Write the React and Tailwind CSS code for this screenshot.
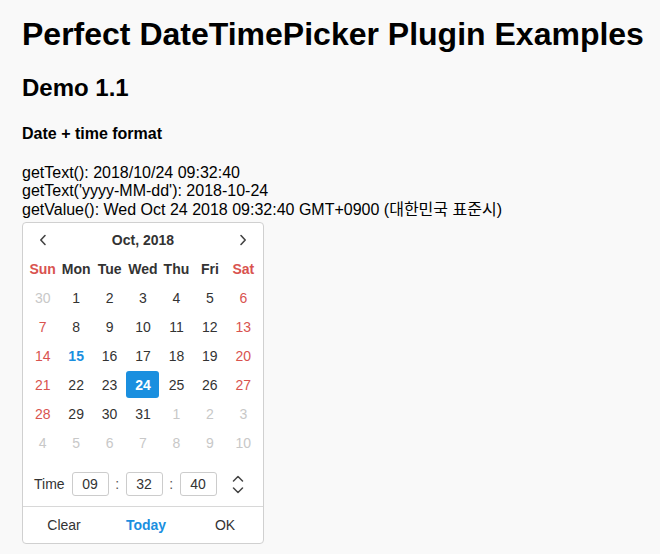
import React from "react";

const font = { fontFamily: '"Liberation Sans", Arial, "Noto Sans CJK KR", sans-serif' };

const weeks = [
  [[30, "o"], [1], [2], [3], [4], [5], [6]],
  [[7], [8], [9], [10], [11], [12], [13]],
  [[14], [15, "today"], [16], [17], [18], [19], [20]],
  [[21], [22], [23], [24, "sel"], [25], [26], [27]],
  [[28], [29], [30], [31], [1, "o"], [2, "o"], [3, "o"]],
  [[4, "o"], [5, "o"], [6, "o"], [7, "o"], [8, "o"], [9, "o"], [10, "o"]],
];

function Day({ d, kind, col }) {
  if (kind === "sel") {
    return (
      <div className="flex h-[29px] items-center justify-center">
        <div className="flex h-[27px] w-[33px] items-center justify-center rounded-[3px] bg-[#1a8fdf] font-bold text-white">
          {d}
        </div>
      </div>
    );
  }
  let cls = "text-[#333333]";
  if (kind === "o") cls = "text-[#c8c8c8]";
  else if (kind === "today") cls = "font-bold text-[#1a8fdf]";
  else if (col === 0 || col === 6) cls = "text-[#d9534f]";
  return <div className={"flex h-[29px] items-center justify-center " + cls}>{d}</div>;
}

function Chevron({ dir }) {
  return (
    <svg width="8" height="12" viewBox="0 0 8 12" fill="none" stroke="#444" strokeWidth="1.6" strokeLinecap="round" strokeLinejoin="round">
      {dir === "left" ? <polyline points="6,1.5 1.8,6 6,10.5" /> : <polyline points="2,1.5 6.2,6 2,10.5" />}
    </svg>
  );
}

export default function App() {
  return (
    <div className="min-h-[554px] bg-[#f9f9f9] pl-[22px] pt-[16px] text-black" style={font}>
      <h1 className="text-[32px] font-bold leading-[37px]">Perfect DateTimePicker Plugin Examples</h1>
      <h2 className="mt-[21px] text-[24px] font-bold leading-[28px]">Demo 1.1</h2>
      <h4 className="mt-[23px] text-[16px] font-bold leading-[18px]">Date + time format</h4>
      <div className="mt-[21px] text-[16px] leading-[18.4px]">
        <div>getText(): 2018/10/24 09:32:40</div>
        <div>getText('yyyy-MM-dd'): 2018-10-24</div>
        <div>getValue(): Wed Oct 24 2018 09:32:40 GMT+0900 (대한민국 표준시)</div>
      </div>
      <div className="mt-[3px] w-[242px] rounded-[4px] border border-[#d0d0d0] bg-white text-[14px] leading-[16px] text-[#333333]">
        <div className="px-[3px] pt-[2px]">
          <div className="grid h-[29px] grid-cols-7 items-center">
            <div className="flex justify-center pl-[1px]">
              <Chevron dir="left" />
            </div>
            <div className="col-span-5 text-center font-bold">Oct, 2018</div>
            <div className="flex justify-center">
              <Chevron dir="right" />
            </div>
          </div>
          <div className="grid grid-cols-7 font-bold">
            {["Sun", "Mon", "Tue", "Wed", "Thu", "Fri", "Sat"].map((w, i) => (
              <div
                key={w}
                className={
                  "flex h-[29px] items-center justify-center " +
                  (i === 0 || i === 6 ? "text-[#d9534f]" : "text-[#333333]")
                }
              >
                {w}
              </div>
            ))}
          </div>
          {weeks.map((wk, r) => (
            <div key={r} className="grid grid-cols-7">
              {wk.map(([d, k], c) => (
                <Day key={c} d={d} kind={k} col={c} />
              ))}
            </div>
          ))}
        </div>
        <div className="flex items-center pb-[10px] pl-[11px] pt-[15px]">
          <span className="mr-[7px] text-[#333333]">Time</span>
          <div className="flex h-[24px] w-[37px] items-center justify-center rounded-[3px] border border-[#cccccc]">09</div>
          <span className="w-[17px] text-center text-[#555]">:</span>
          <div className="flex h-[24px] w-[37px] items-center justify-center rounded-[3px] border border-[#cccccc]">32</div>
          <span className="w-[17px] text-center text-[#555]">:</span>
          <div className="flex h-[24px] w-[37px] items-center justify-center rounded-[3px] border border-[#cccccc]">40</div>
          <div className="ml-[15px] flex flex-col items-center gap-[5px]">
            <svg width="12" height="7" viewBox="0 0 12 7" fill="none" stroke="#444" strokeWidth="1.5" strokeLinecap="round" strokeLinejoin="round">
              <polyline points="1.5,6 6,1.5 10.5,6" />
            </svg>
            <svg width="12" height="7" viewBox="0 0 12 7" fill="none" stroke="#444" strokeWidth="1.5" strokeLinecap="round" strokeLinejoin="round">
              <polyline points="1.5,1 6,5.5 10.5,1" />
            </svg>
          </div>
        </div>
        <div className="grid h-[37px] grid-cols-[82px_82px_1fr] items-center border-t border-[#d8d8d8] text-[#333333]">
          <div className="text-center">Clear</div>
          <div className="text-center font-bold text-[#1a8fdf]">Today</div>
          <div className="text-center">OK</div>
        </div>
      </div>
    </div>
  );
}
